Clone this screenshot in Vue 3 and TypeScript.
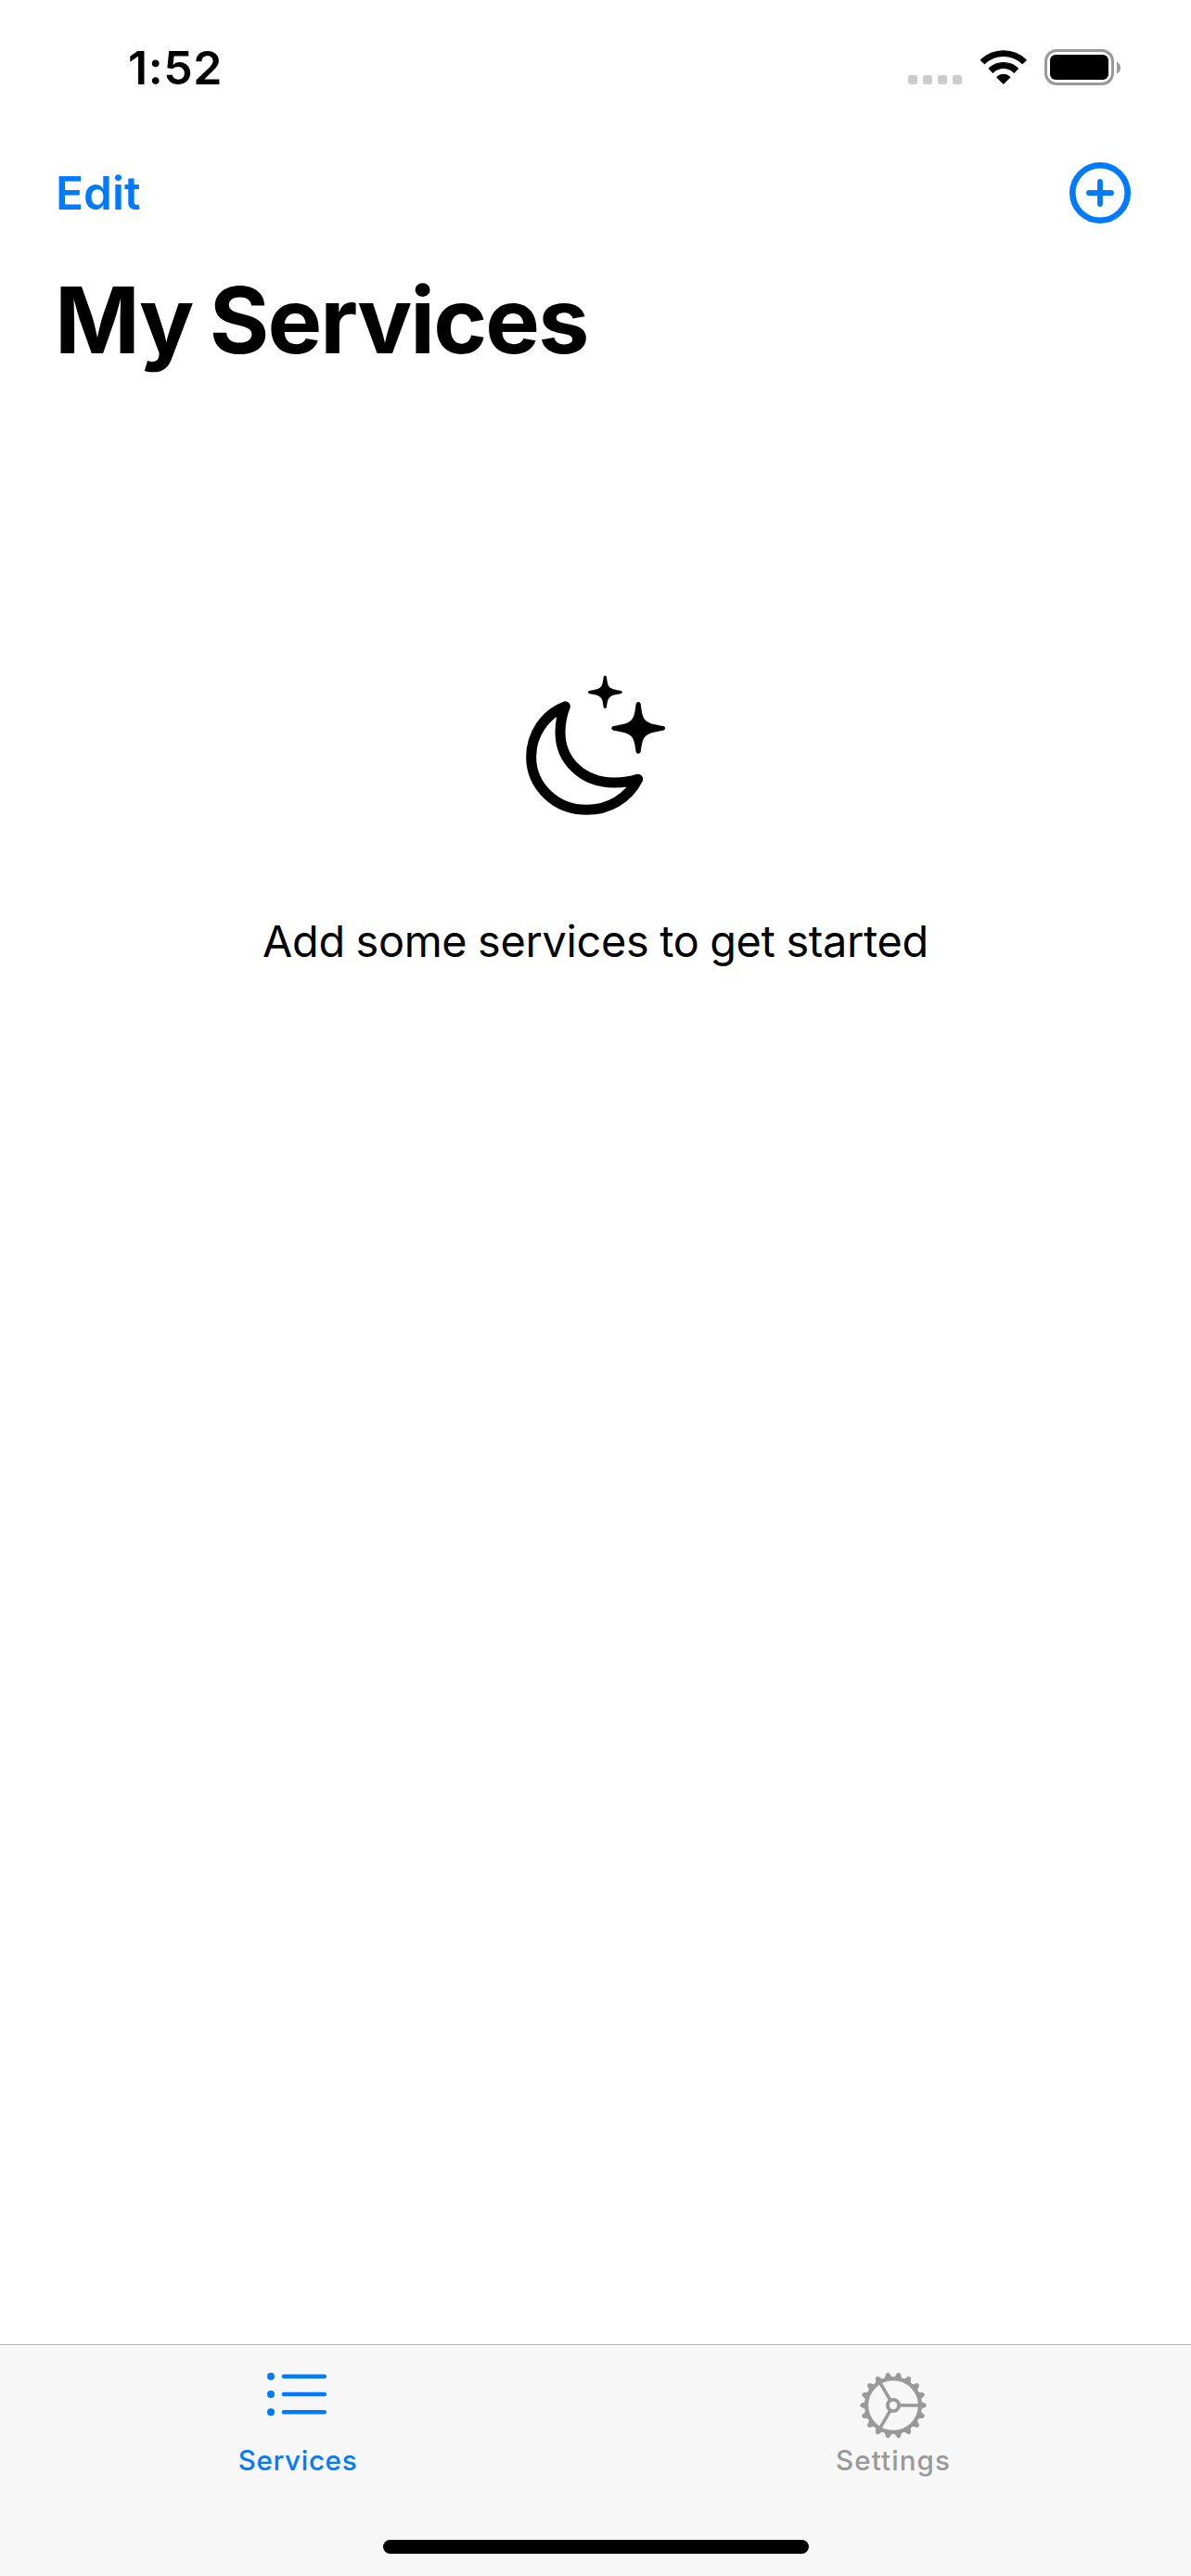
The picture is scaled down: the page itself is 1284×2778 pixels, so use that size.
<script setup lang="ts">
interface Tab {
  id: 'services' | 'settings'
  label: string
}

const tabs: Tab[] = [
  { id: 'services', label: 'Services' },
  { id: 'settings', label: 'Settings' },
]
const activeTab: Tab['id'] = 'services'

const teeth = Array.from({ length: 18 }, (_, i) => i * 20)
const spokes = [0, 120, 240]
const star =
  'M0 -85 Q7 -85 8 -76 C12 -42 16 -30 28 -22 C37 -15 52 -12 80 -7 Q87 -6 87 0 Q87 6 80 7 C52 12 37 15 28 22 C16 30 12 42 8 75 Q7 83 0 83 Q-7 83 -8 75 C-12 42 -16 30 -28 22 C-37 15 -52 12 -80 7 Q-87 6 -87 0 Q-87 -6 -80 -7 C-52 -12 -37 -15 -28 -22 C-16 -30 -12 -42 -8 -76 Q-7 -85 0 -85Z'
</script>

<template>
  <div class="screen">
    <header class="status">
      <span class="time">1:52</span>
      <div class="indicators">
        <div class="signal"><i v-for="n in 4" :key="n"></i></div>
        <svg class="wifi" width="52" height="39" viewBox="287 39 156 117">
          <g stroke="#000" stroke-width="4" stroke-linejoin="round">
            <path d="M291.5 74A105 105 0 0 1 437.500 74L425.500 85.500A88 88 0 0 0 303.500 85.500Z" />
            <path d="M318 101.500A68 68 0 0 1 411 101.500L399 114.500A49 49 0 0 0 330 114.500Z" />
            <path d="M344 129.500A29 29 0 0 1 385 129.500L364.500 150Z" />
          </g>
        </svg>
        <div class="battery"><div class="charge"></div></div>
        <svg class="nub" width="4" height="14" viewBox="0 0 4 14"><path d="M0 .5Q4 2.500 4 7T0 13.500Z" fill="#999" /></svg>
      </div>
    </header>

    <nav class="navbar">
      <button class="edit" type="button">Edit</button>
      <button class="add" type="button" aria-label="Add">
        <svg width="66" height="66" viewBox="0 0 66 66" fill="none" stroke="#007aff" stroke-linecap="round">
          <circle cx="33" cy="33" r="29.700" stroke-width="6.600" />
          <path d="M33 21V45M21 33H45" stroke-width="5.800" />
        </svg>
      </button>
    </nav>

    <h1>My Services</h1>

    <main>
      <svg class="moon" width="180" height="180" viewBox="0 0 540 540">
        <path
          d="M178 155.500C168 180 162 207 162 239C162 331 235 402 335 402C362 402 390 399 413 390.500C382 452 320 490 247 490C147 490 68 414 68 319C68 246 112 181 178 155.500Z"
          fill="none" stroke="#000" stroke-width="33" stroke-linejoin="round"
        />
        <path :d="star" transform="translate(414.500 226)" />
        <path :d="star" transform="translate(307 109.500) scale(.635)" />
      </svg>
      <p>Add some services to get started</p>
    </main>

    <footer>
      <div class="tabs">
        <a v-for="tab in tabs" :key="tab.id" class="tab" :class="[tab.id, { active: tab.id === activeTab }]">
          <span class="icon">
            <svg v-if="tab.id === 'services'" width="66" height="50" viewBox="0 0 66 50" stroke="currentColor" fill="currentColor">
              <g stroke="none">
                <circle cx="5" cy="5.700" r="4" />
                <circle cx="5" cy="25" r="4" />
                <circle cx="5" cy="44.200" r="4" />
              </g>
              <path d="M19 5.700H62.800M19 25H62.800M19 44.200H62.800" stroke-width="4.600" stroke-linecap="round" />
            </svg>
            <svg v-else width="74" height="74" viewBox="-37 -37 74 74" fill="none" stroke="currentColor">
              <circle r="28.900" stroke-width="4.200" />
              <circle r="6.100" stroke-width="3.800" />
              <path v-for="a in spokes" :key="'s' + a" d="M7 0H28" stroke-width="3.500" :transform="`rotate(${a})`" />
              <path
                v-for="a in teeth" :key="'t' + a" d="M30 -3.600L34.500 -1.700Q36.400 0 34.500 1.700L30 3.600Z"
                fill="currentColor" stroke-width=".8" :transform="`rotate(${a})`"
              />
            </svg>
          </span>
          <span class="label">{{ tab.label }}</span>
        </a>
      </div>
      <div class="home"></div>
    </footer>
  </div>
</template>

<style>
body {
  background: #fff;
}
</style>

<style scoped>
.screen {
  display: flex;
  flex-direction: column;
  width: 1284px;
  height: 2778px;
  overflow: hidden;
  background: #fff;
  color: #000;
  font-family: Inter, "Liberation Sans", sans-serif;
}
.status {
  box-sizing: border-box;
  height: 160px;
  padding: 43px 76px 0 138px;
  display: flex;
  justify-content: space-between;
  align-items: flex-start;
}
.time {
  font-size: 50px;
  line-height: 60px;
  font-weight: 600;
  letter-spacing: 0.6px;
}
.indicators {
  display: flex;
  align-items: center;
  padding-top: 10px;
}
.signal {
  display: flex;
  gap: 6px;
  padding-top: 27px;
  margin-right: 19px;
}
.signal i {
  width: 10px;
  height: 10px;
  border-radius: 3px;
  background: #ccc;
}
.battery {
  box-sizing: border-box;
  width: 75px;
  height: 39px;
  margin: 0 3px 0 18px;
  padding: 3px;
  border: 3px solid #999;
  border-radius: 13px;
}
.charge {
  height: 27px;
  border-radius: 6px;
  background: #000;
}
.navbar {
  height: 96px;
  padding: 0 65px 0 60px;
  display: flex;
  align-items: center;
  justify-content: space-between;
}
button {
  display: flex;
  padding: 0;
  border: 0;
  background: none;
  color: #007aff;
  font: 560 49.5px/60px Inter, "Liberation Sans", sans-serif;
  letter-spacing: 0.1px;
}
h1 {
  margin: 29px 0 0 59px;
  font-size: 98.6px;
  line-height: 120px;
  font-weight: 700;
  letter-spacing: -1.9px;
  word-spacing: -3px;
}
main {
  flex: 1;
  display: flex;
  flex-direction: column;
  align-items: center;
  padding-top: 305px;
}
.moon {
  margin-right: 4px;
}
p {
  margin: 95px 0 0;
  font-size: 46.8px;
  line-height: 60px;
  letter-spacing: -0.3px;
  word-spacing: -1.1px;
  white-space: nowrap;
}
footer {
  box-sizing: border-box;
  height: 250px;
  border-top: 1px solid #b2b2b2;
  background: #f7f7f7;
}
.tabs {
  display: flex;
  height: 210px;
}
.tab {
  flex: 1;
  display: flex;
  flex-direction: column;
  align-items: center;
  color: #999;
}
.tab.active {
  color: #007aff;
}
.icon {
  display: flex;
  align-items: flex-start;
  height: 78px;
  padding-top: 28px;
}
.services .icon {
  margin-right: 2px;
}
.label {
  font-size: 29.5px;
  line-height: 36px;
  font-weight: 460;
  letter-spacing: 0.7px;
}
.settings .label {
  letter-spacing: 1.1px;
}
.home {
  width: 459px;
  height: 15px;
  margin: 0 auto;
  border-radius: 8px;
  background: #000;
}
</style>
